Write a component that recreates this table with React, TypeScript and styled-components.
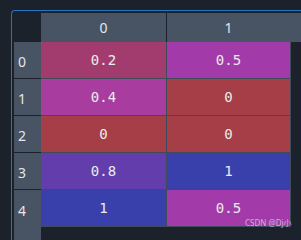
import React from 'react';
import styled, { createGlobalStyle } from 'styled-components';

const GlobalStyle = createGlobalStyle`
  html, body {
    margin: 0;
    padding: 0;
    height: 100%;
    overflow: hidden;
    background: #1b222b;
  }
  #root {
    height: 100%;
  }
`;

const Page = styled.div`
  position: relative;
  height: 100%;
  padding: 10px 0 0 11px;
  box-sizing: border-box;
  overflow: hidden;
`;

const Frame = styled.div`
  width: 100%;
  height: 100%;
  border-top: 1px solid #2474c6;
  border-left: 1px solid #2474c6;
  border-top-left-radius: 4px;
  padding: 2px 0 0 2px;
  box-sizing: border-box;
  display: flex;
  flex-direction: column;
`;

const HeaderRow = styled.div`
  display: flex;
  height: 29px;
  flex-shrink: 0;
`;

const Corner = styled.div`
  width: 27px;
  flex-shrink: 0;
`;

const HeaderCells = styled.div`
  flex: 1;
  display: flex;
  background: #485464;
`;

const HeaderCell = styled.div<{ $w: number; $divider?: boolean }>`
  width: ${(p) => p.$w}px;
  flex-shrink: 0;
  box-sizing: border-box;
  border-right: ${(p) => (p.$divider ? '1px solid #1b222b' : 'none')};
  display: flex;
  align-items: center;
  justify-content: center;
  font-family: 'Noto Sans', 'Liberation Sans', sans-serif;
  font-size: 14px;
  color: #e4e6ea;
`;

const Body = styled.div`
  flex: 1;
  display: flex;
  align-items: flex-start;
  min-height: 0;
`;

const IndexColumn = styled.div`
  width: 27px;
  align-self: stretch;
  display: flex;
  flex-direction: column;
  background: #485464;
`;

const IndexCell = styled.div<{ $last?: boolean }>`
  height: ${(p) => (p.$last ? 'auto' : '37px')};
  flex: ${(p) => (p.$last ? 1 : 'none')};
  box-sizing: border-box;
  border-bottom: ${(p) => (p.$last ? 'none' : '1px solid #1b222b')};
  padding: ${(p) => (p.$last ? '10px' : '0')} 0 0 4px;
  display: flex;
  align-items: ${(p) => (p.$last ? 'flex-start' : 'center')};
  font-family: 'Noto Sans', 'Liberation Sans', sans-serif;
  font-size: 14px;
  line-height: 1;
  color: #e4e6ea;
  & > span {
    padding-top: 4px;
  }
`;

const DataGrid = styled.div`
  display: grid;
  grid-template-columns: 125px 123px;
  grid-auto-rows: 36px;
  gap: 1px;
  padding: 0 1px 1px 0;
  background: #3f4a5a;
`;

const DataCell = styled.div<{ $bg: string }>`
  background: ${(p) => p.$bg};
  display: flex;
  align-items: center;
  justify-content: center;
  font-family: 'DejaVu Sans Mono', 'Liberation Mono', monospace;
  font-size: 14px;
  color: #ececec;
`;

const Watermark = styled.div`
  position: absolute;
  left: 245px;
  top: 218px;
  font-family: 'Noto Sans', 'Noto Sans CJK SC', sans-serif;
  font-size: 8px;
  line-height: 10px;
  color: rgba(225, 225, 225, 0.7);
  white-space: nowrap;
`;

const colors: Record<string, string> = {
  rose: '#a33c6e',
  magenta: '#a23ba9',
  orchid: '#a83c9f',
  red: '#a53e47',
  purple: '#623dab',
  blue: '#3a40ab',
};

const rows: { value: string; color: string }[][] = [
  [
    { value: '0.2', color: colors.rose },
    { value: '0.5', color: colors.magenta },
  ],
  [
    { value: '0.4', color: colors.orchid },
    { value: '0', color: colors.red },
  ],
  [
    { value: '0', color: colors.red },
    { value: '0', color: colors.red },
  ],
  [
    { value: '0.8', color: colors.purple },
    { value: '1', color: colors.blue },
  ],
  [
    { value: '1', color: colors.blue },
    { value: '0.5', color: colors.magenta },
  ],
];

const App: React.FC = () => (
  <>
    <GlobalStyle />
    <Page>
      <Frame>
        <HeaderRow>
          <Corner />
          <HeaderCells>
            <HeaderCell $w={126} $divider>
              0
            </HeaderCell>
            <HeaderCell $w={123}>1</HeaderCell>
          </HeaderCells>
        </HeaderRow>
        <Body>
          <IndexColumn>
            {rows.map((_, i) => (
              <IndexCell key={i} $last={i === rows.length - 1}>
                <span>{i}</span>
              </IndexCell>
            ))}
          </IndexColumn>
          <DataGrid>
            {rows.map((row, i) =>
              row.map((cell, j) => (
                <DataCell key={`${i}-${j}`} $bg={cell.color}>
                  {cell.value}
                </DataCell>
              )),
            )}
          </DataGrid>
        </Body>
      </Frame>
      <Watermark>CSDN @Dj小</Watermark>
    </Page>
  </>
);

export default App;
